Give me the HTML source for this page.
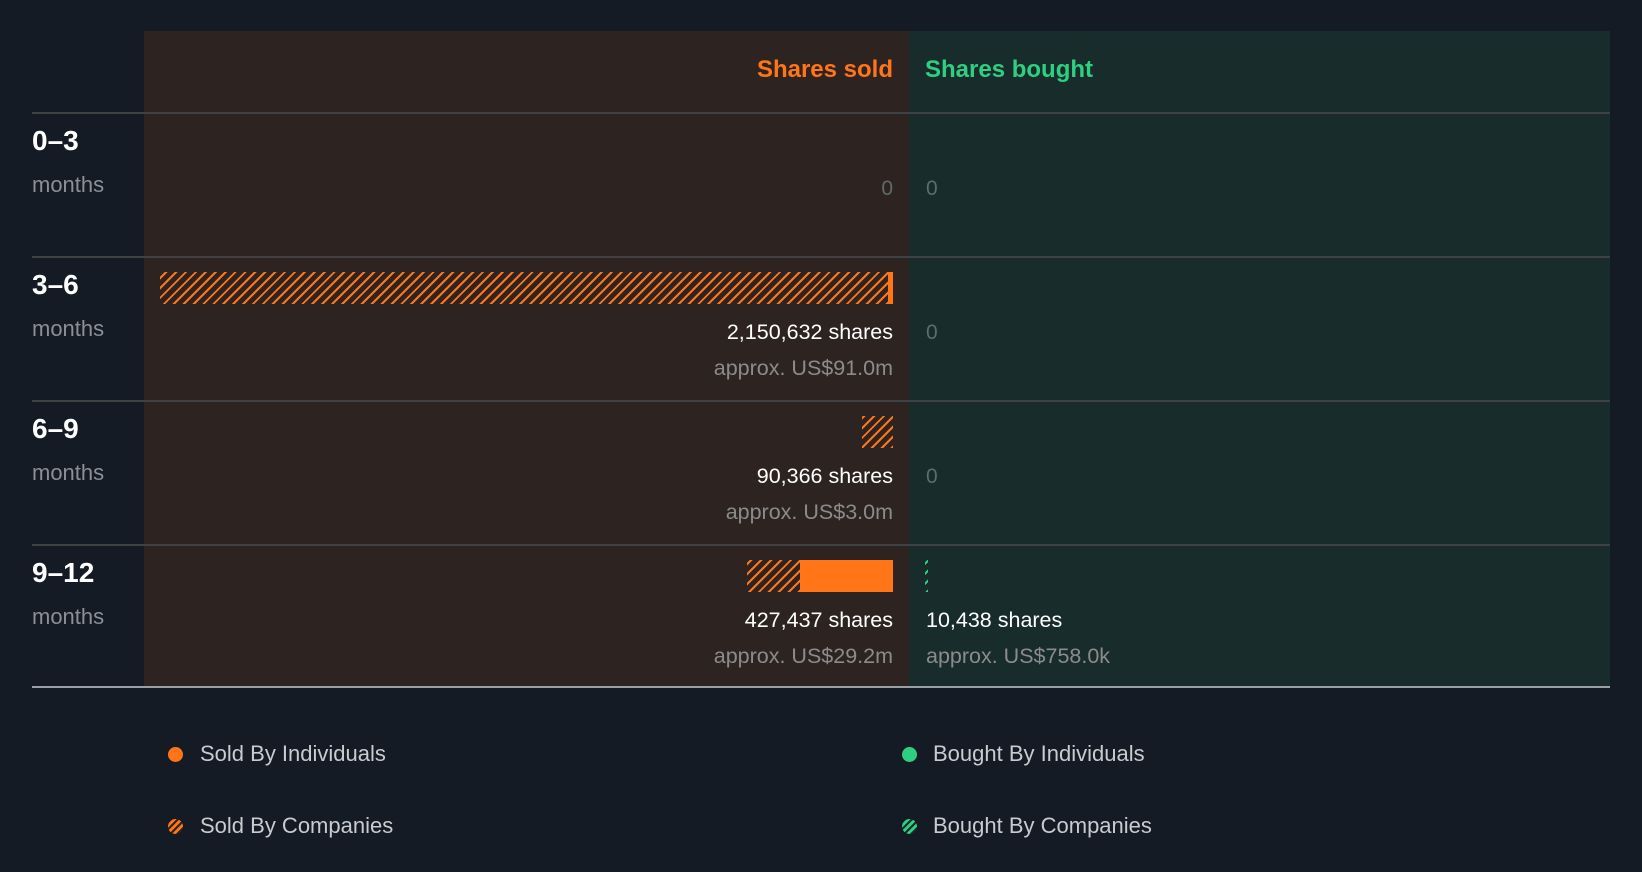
<!DOCTYPE html>
<html><head><meta charset="utf-8"><style>
*{margin:0;padding:0;box-sizing:border-box}
body{width:1642px;height:872px;background:#151b24;font-family:"Liberation Sans",sans-serif;position:relative;overflow:hidden}
.a{position:absolute}
.sold{left:144px;width:765px;top:31px;height:656px;background:#2d2421}
.bought{left:909px;width:701px;top:31px;height:656px;background:#182c2c}
.line{left:32px;width:1578px;height:1.5px;background:#3f4244}
.lbl{left:32px;color:#fff;font-weight:bold;font-size:28px}
.mo{left:32px;color:#8a9096;font-size:22px}
.r{right:749px;text-align:right;white-space:nowrap}
.l{left:926px;white-space:nowrap}
.z{color:#5f6a6a;font-size:21px}
.sh{color:#fff;font-size:21.5px}
.ap{color:#8b8b8b;font-size:21.5px}
.hatch{background:repeating-linear-gradient(-45deg,#ff7518 0 2px,transparent 2px 7px)}
.ghatch{background:repeating-linear-gradient(-45deg,#2ecf80 0 2px,transparent 2px 7px)}
.leg{color:#c8cbd0;font-size:22px}
.dot{width:15px;height:15px;border-radius:50%}
</style></head><body>
<div class="a sold"></div><div class="a bought"></div>
<div class="a" style="right:749px;top:56px;color:#ff7518;font-weight:bold;font-size:24px">Shares sold</div>
<div class="a" style="left:925px;top:56px;color:#2ecf80;font-weight:bold;font-size:24px">Shares bought</div>
<div class="a line" style="top:112px"></div>
<div class="a line" style="top:256px"></div>
<div class="a line" style="top:400px"></div>
<div class="a line" style="top:544px"></div>
<div class="a line" style="top:686px;height:2px;background:#9aa0a6"></div>

<div class="a lbl" style="top:125px">0–3</div><div class="a mo" style="top:172px">months</div>
<div class="a lbl" style="top:269px">3–6</div><div class="a mo" style="top:316px">months</div>
<div class="a lbl" style="top:413px">6–9</div><div class="a mo" style="top:460px">months</div>
<div class="a lbl" style="top:557px">9–12</div><div class="a mo" style="top:604px">months</div>

<div class="a r z" style="top:177px">0</div><div class="a l z" style="top:177px">0</div>

<div class="a hatch" style="left:160px;width:728px;top:272px;height:32px"></div>
<div class="a" style="left:888px;width:5px;top:272px;height:32px;background:#ff7518"></div>
<div class="a r sh" style="top:320px">2,150,632 shares</div>
<div class="a r ap" style="top:356px">approx. US$91.0m</div>
<div class="a l z" style="top:321px">0</div>

<div class="a hatch" style="left:862px;width:31px;top:416px;height:32px"></div>
<div class="a r sh" style="top:464px">90,366 shares</div>
<div class="a r ap" style="top:500px">approx. US$3.0m</div>
<div class="a l z" style="top:465px">0</div>

<div class="a hatch" style="left:747px;width:53px;top:560px;height:32px"></div>
<div class="a" style="left:800px;width:93px;top:560px;height:32px;background:#ff7518"></div>
<div class="a ghatch" style="left:925px;width:3px;top:560px;height:32px"></div>
<div class="a r sh" style="top:608px">427,437 shares</div>
<div class="a r ap" style="top:644px">approx. US$29.2m</div>
<div class="a l sh" style="top:608px">10,438 shares</div>
<div class="a l ap" style="top:644px">approx. US$758.0k</div>

<div class="a dot" style="left:168px;top:747px;background:#ff7518"></div>
<div class="a leg" style="left:200px;top:741px">Sold By Individuals</div>
<div class="a dot" style="left:902px;top:747px;background:#2ecf80"></div>
<div class="a leg" style="left:933px;top:741px">Bought By Individuals</div>
<div class="a dot" style="left:168px;top:819px;background:repeating-linear-gradient(-45deg,#ff7518 0 3px,#2d2421 3px 5px)"></div>
<div class="a leg" style="left:200px;top:813px">Sold By Companies</div>
<div class="a dot" style="left:902px;top:819px;background:repeating-linear-gradient(-45deg,#2ecf80 0 3px,#182c2c 3px 5px)"></div>
<div class="a leg" style="left:933px;top:813px">Bought By Companies</div>
</body></html>
